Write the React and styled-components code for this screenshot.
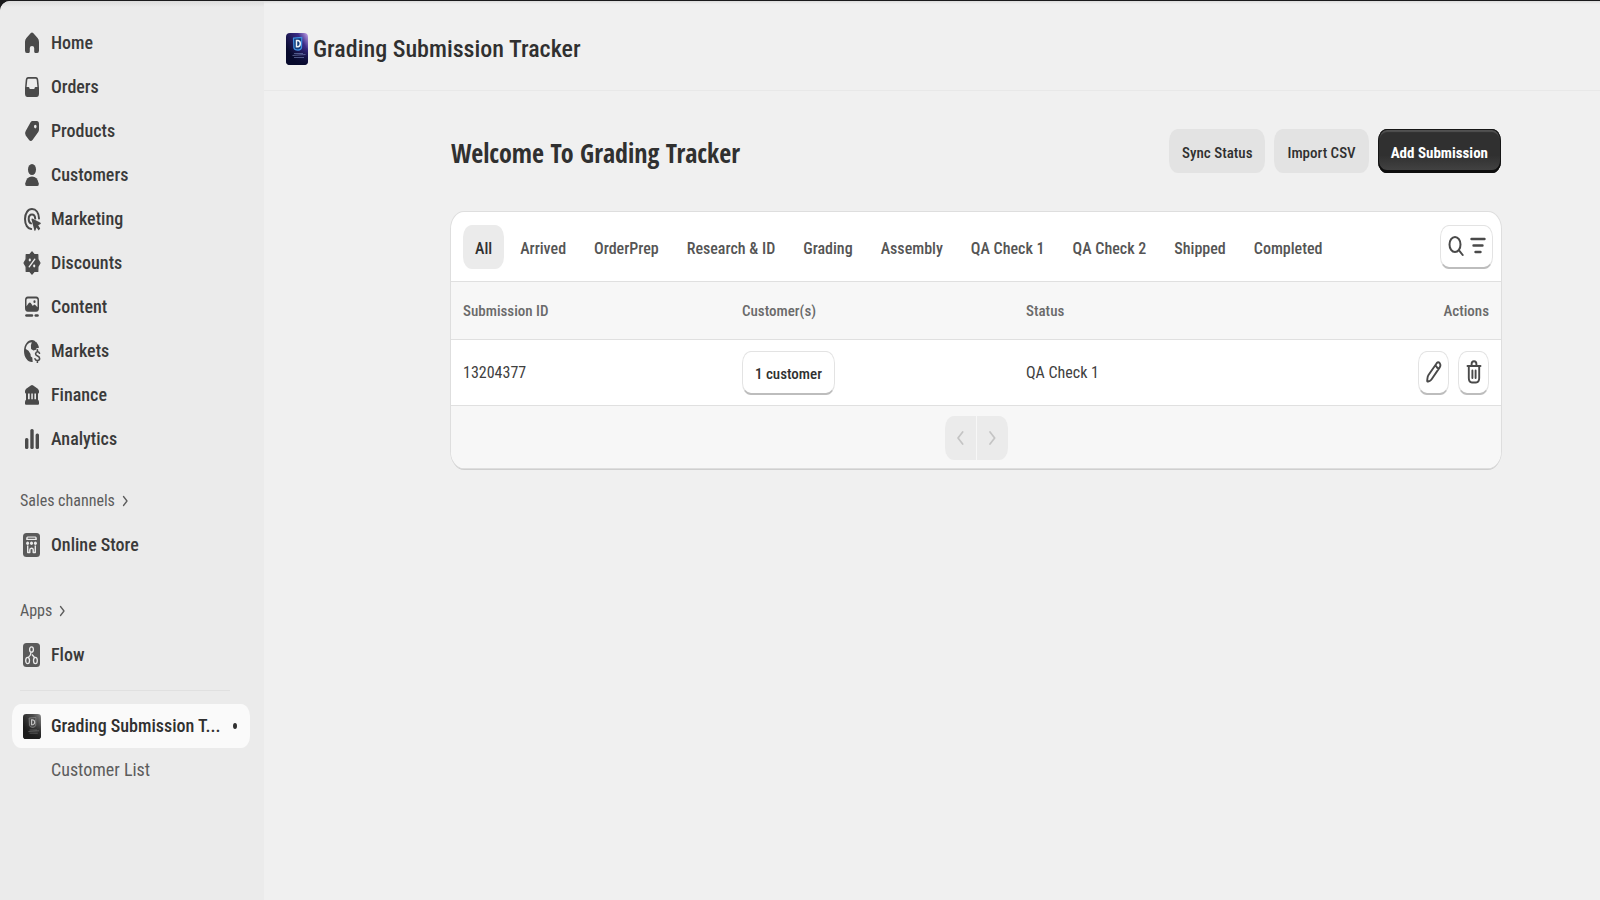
import React from "react";
import styled, { createGlobalStyle, css } from "styled-components";

const GlobalStyle = createGlobalStyle`
  *, *::before, *::after { box-sizing: border-box; }
  body {
    margin: 0;
    background: #1a1a1c;
    color: #303030;
    font-family: "Roboto Condensed", "Liberation Sans", sans-serif;
    font-size: 16px;
    line-height: 24px;
  }
  button, a { font: inherit; color: inherit; text-decoration: none; }
  button { border: 0; margin: 0; padding: 0; background: none; cursor: pointer; }
  h1, h2, h3, ul { margin: 0; padding: 0; font-weight: inherit; font-size: inherit; }
  ul { list-style: none; }
  svg { display: block; flex: none; }
`;

/* ---------- shell ---------- */

const Shell = styled.div`
  display: grid;
  grid-template-columns: 264px minmax(0, 1fr);
  min-height: calc(100vh - 1px);
  margin-top: 1px;
  border-top-left-radius: 10px;
  overflow: hidden;
  background: linear-gradient(#dcdcdc, #f0f0f0 3px);
`;

const Sidebar = styled.nav`
  padding: 20px 14px 20px 12px;
  background: linear-gradient(#dcdcdc, #ebebeb 6px);
  font-size: 18px;
`;

const NavLink = styled.a`
  display: flex;
  align-items: center;
  gap: 10px;
  height: 44px;
  padding: 0 13px 0 11px;
  border-radius: 9px / 12px;
  font-weight: 500;
  color: ${(p) => (p.$active ? "#303030" : "#3a3a3a")};
  background: ${(p) => (p.$active ? "#fafafa" : "transparent")};
`;

const SubLink = styled(NavLink)`
  padding-left: 39px;
  font-weight: 400;
  color: #5c5c5c;
`;

const Dot = styled.span`
  width: 4px;
  height: 6px;
  margin-left: auto;
  border-radius: 50%;
  background: #303030;
`;

const Group = styled.section`
  margin-top: ${(p) => p.$gap}px;
`;

const GroupTitle = styled.h2`
  display: flex;
  align-items: center;
  gap: 7px;
  height: 44px;
  padding-left: 8px;
  font-size: 16px;
  color: #5c5c5c;
`;

const Divider = styled.hr`
  height: 1px;
  margin: 13px 20px 13px 8px;
  border: 0;
  background: #e0e0e0;
`;

const Glyph = styled.svg`
  width: 18px;
  height: 24px;
  color: #4a4a4a;
`;

const icon = (children) => () => (
  <Glyph viewBox="0 0 18 24" fill="currentColor" aria-hidden="true">
    {children}
  </Glyph>
);

const HomeIcon = icon(
  <path d="M7.6 2.2Q9 .9 10.4 2.2L14.6 7Q16 8.7 16 11v8.5q0 2.5-1.8 2.500h-2q-1 0-1-1.400V17q0-2-2.200-2t-2.200 2v3.600q0 1.400-1 1.400h-2Q2 22 2 19.500V11q0-2.300 1.400-4z" />
);
const OrdersIcon = icon(
  <path
    fillRule="evenodd"
    d="M5.200 2h7.600q2.200 0 2.500 3L16 13v5.500q0 3.500-2.600 3.500H4.600Q2 22 2 18.500V13l.7-8q.3-3 2.500-3zm.2 1.800q-1 0-1.100 1.300L3.600 12h1.900q.7 0 .8.8 0 1.200 1 1.200h3.400q1 0 1-1.200.1-.8.8-.8h1.900l-.7-6.900q-.1-1.300-1.100-1.300z"
  />
);
const ProductsIcon = icon(
  <path
    fillRule="evenodd"
    d="M9.500 2h4.200q2.300 0 2.300 3v5.500q0 1.500-.9 2.800l-5.400 7.500q-1.900 2.400-3.800 0l-3.200-4.300q-1.500-2.300 0-4.600L7.600 3.200Q8.400 2 9.500 2zm2.800 3.800a1.300 1.800 0 1 0 0 3.600 1.300 1.800 0 0 0 0-3.600z"
  />
);
const CustomersIcon = icon(
  <>
    <ellipse cx="9" cy="6.500" rx="4" ry="5.500" />
    <path d="M2.200 20.500Q3.500 13.500 9 13.500t6.800 7q.3 2.500-1.500 2.500H3.700q-1.800 0-1.500-2.500z" />
  </>
);
const MarketingIcon = icon(
  <>
    <path d="M16 11.500C15.800 5.800 13 2 9 2s-7 4.200-7 10 2.800 9.800 6.200 10" fill="none" stroke="currentColor" strokeWidth="2" strokeLinecap="round" />
    <path d="M12.200 11.500C12 8.800 10.800 7.500 9 7.500S5.700 9.300 5.700 12s1 4 2.300 4.400" fill="none" stroke="currentColor" strokeWidth="2" strokeLinecap="round" />
    <path d="M9.300 11.500l8.200 4.200q.7.500 0 1.200l-2.300 1.300 2 3.200-1.500 2.100-2.200-3-1.100 3q-.5.900-1 0L8.500 12.600q-.1-1.200.8-1.100z" />
  </>
);
const DiscountsIcon = icon(
  <>
    <path
      d="M9 .8L11.300 3.600 14.800 3.600 14.900 8.400 17 12 14.900 15.600 14.800 20.400 11.300 20.400 9 23.200 6.700 20.400 3.200 20.400 3.100 15.600 1 12 3.100 8.400 3.200 3.600 6.700 3.600z"
      stroke="currentColor"
      strokeWidth="1.200"
      strokeLinejoin="round"
    />
    <path d="M11.800 8.200l-5.600 7.600" stroke="#ebebeb" strokeWidth="1.400" strokeLinecap="round" />
    <ellipse cx="6.800" cy="9" rx="1.100" ry="1.400" fill="#ebebeb" />
    <ellipse cx="11.200" cy="15" rx="1.100" ry="1.400" fill="#ebebeb" />
  </>
);
const ContentIcon = icon(
  <>
    <path
      fillRule="evenodd"
      d="M4.800 1.500h8.400Q16 1.500 16 5v8q0 3.800-2.800 3.800H4.800Q2 16.800 2 13V5q0-3.500 2.800-3.500zm0 1.900Q3.500 3.400 3.500 5v6.200L5.800 8q1-1.200 2 0l2 3 .9-1q.8-.9 1.600 0l2.200 2.200V5q0-1.600-1.300-1.600zM11.500 5.300a1.100 1.400 0 1 1 0 2.800 1.100 1.400 0 0 1 0-2.800z"
    />
    <rect x="2.200" y="19.300" width="8" height="2.400" rx="1.200" />
    <rect x="11.500" y="19.300" width="4.300" height="2.400" rx="1.200" />
  </>
);
const MarketsIcon = icon(
  <>
    <path d="M9 1C4.600 1 1 5.700 1 12s3.600 11 8 11h.7l-.4-4.500-1.500-.9-.3-2.700-2-3.200-2.700-1.800C3 6.300 5.500 3.200 8.800 3.200l-.9 3 .2 3.900 2.300 1.300 3.200-1L12 7.500l1.700-3.200C12.400 2.200 10.900 1 9 1z" />
    <path d="M12.900 2.800c1.600 1.500 2.700 3.600 3.100 6l-2.300.4-2.600 1.500 1-4.500z" />
    <path d="M16.500 14.200Q16 12.700 14.500 12.700t-1.900 2q0 1.600 2 2.400t2 2.400q0 2-2.100 2T12 19.900M14.400 10.800v1.900M14.400 21.500v1.900" fill="none" stroke="currentColor" strokeWidth="1.600" strokeLinecap="round" />
  </>
);
const FinanceIcon = icon(
  <>
    <path d="M7.800 2.400q1.200-1 2.400 0l4.600 3.400Q16 6.800 16 8.300v.9q0 1.300-1 1.300H3q-1 0-1-1.300v-.9q0-1.500 1.200-2.500z" />
    <path d="M3 10h2v7H3zM6.700 10h1.600v7H6.700zM9.800 10h1.600v7H9.800zM13 10h2v7h-2z" />
    <path d="M3.500 16.300h11Q16 17.300 16 19v1.500q0 1.200-1 1.200H3q-1 0-1-1.200V19q0-1.700 1.500-2.700z" />
  </>
);
const AnalyticsIcon = icon(
  <>
    <rect x="2" y="11" width="3.400" height="11" rx="1.500" />
    <rect x="7.300" y="2" width="3.400" height="20" rx="1.500" />
    <rect x="12.600" y="6.500" width="3.400" height="15.500" rx="1.500" />
  </>
);
const StoreIcon = icon(
  <>
    <rect x="0" y="0" width="17" height="24" rx="3.500" fill="#5a5a5a" />
    <path d="M4.500 3.500h8Q13.500 3.500 13.800 5v2H3.200V5Q3.500 3.500 4.500 3.500z" fill="#ebebeb" />
    <path d="M4.700 5.200h7.600" stroke="#5a5a5a" strokeWidth="1.200" />
    <g fill="#ebebeb">
      <ellipse cx="4.600" cy="10.200" rx="1.500" ry="1.700" />
      <ellipse cx="8.500" cy="10.200" rx="1.500" ry="1.700" />
      <ellipse cx="12.400" cy="10.200" rx="1.500" ry="1.700" />
    </g>
    <path d="M4.700 12.500v7h2.100V17q0-1.800 1.700-1.800t1.700 1.800v2.500h2.100v-7" fill="none" stroke="#ebebeb" strokeWidth="1.400" strokeLinejoin="round" />
  </>
);
const FlowIcon = icon(
  <>
    <rect x="0" y="0" width="17" height="24" rx="3.500" fill="#5a5a5a" />
    <g fill="none" stroke="#ebebeb" strokeWidth="1.300">
      <ellipse cx="8.500" cy="6.500" rx="1.900" ry="2.700" />
      <ellipse cx="4.600" cy="17.500" rx="1.900" ry="3.200" />
      <ellipse cx="12.400" cy="17.500" rx="1.900" ry="3.200" />
      <path d="M8 9.200Q8.200 12 5.300 14.500M9 11.500l2.500 3" />
    </g>
  </>
);
const Chevron = ({ left, size = 12 }) => (
  <svg width={size / 2} height={size} viewBox="0 0 6 12" fill="none" stroke="currentColor" strokeWidth="1.300" strokeLinecap="round" strokeLinejoin="round" aria-hidden="true">
    <path d={left ? "M5 1.500L1.500 6 5 10.500" : "M1.500 1.500L5 6l-3.500 4.500"} />
  </svg>
);

const AppLogo = ({ id, width, height, stops, badge, caption }) => (
  <svg width={width} height={height} viewBox="0 0 22 32" preserveAspectRatio="none" aria-hidden="true">
    <defs>
      <linearGradient id={id} x1="1" y1="0" x2="0.2" y2="0.700">
        <stop offset="0" stopColor={stops[0]} />
        <stop offset="0.350" stopColor={stops[1]} />
        <stop offset="1" stopColor={stops[2]} />
      </linearGradient>
      <linearGradient id={`${id}-base`} x1="0" y1="0" x2="0" y2="1">
        <stop offset="0.450" stopColor={stops[2]} stopOpacity="0" />
        <stop offset="1" stopColor={stops[2]} />
      </linearGradient>
    </defs>
    <rect width="22" height="32" rx="4" fill={`url(#${id})`} />
    <rect width="22" height="32" rx="4" fill={`url(#${id}-base)`} />
    <path d="M7.500 5.200l8.300-.8-.3 10.200q-.2 2-3.500 2.600-3.800-.4-4.100-2.400z" fill={badge[0]} stroke={badge[1]} strokeWidth="1.200" />
    <path d="M10.500 7.500h1.600q2.200.3 2.200 3t-2.200 3.300h-1.600z" fill="none" stroke={badge[2]} strokeWidth="1.500" />
    <path d="M8 20.500h9M6.500 22.500l13-1M8 24.500h10" stroke={caption} strokeWidth="0.900" opacity="0.500" />
  </svg>
);

/* ---------- main area ---------- */

const Main = styled.main`
  min-width: 0;
`;

const TitleBar = styled.header`
  display: flex;
  align-items: center;
  gap: 5px;
  height: 90px;
  padding: 6px 22px 0;
  border-bottom: 1px solid #e8e8e8;
  font-size: 24px;
  font-weight: 500;
`;

const Content = styled.div`
  padding: 38px 99px 0 187px;
`;

const PageHead = styled.div`
  display: flex;
  align-items: center;
  justify-content: space-between;
  margin-bottom: 39px;
`;

const PageTitle = styled.h2`
  padding-top: 4px;
  font-family: "Open Sans Condensed", "Roboto Condensed", sans-serif;
  font-size: 26px;
  line-height: 36px;
  font-weight: 700;
`;

const ButtonRow = styled.div`
  display: flex;
  gap: 9px;
`;

const Button = styled.button`
  height: 44px;
  padding: 4px 13px 0;
  border-radius: 9px / 12px;
  font-size: 15px;
  font-weight: 500;
  background: #e3e3e3;
  ${(p) =>
    p.$primary &&
    css`
      color: #fff;
      font-weight: 700;
      background: linear-gradient(#303030 60%, #454545);
      box-shadow: inset 0 -3px 0 #0e0e0e, inset 0 0 0 1px #161616, inset 0 3px 1px #525252;
    `}
`;

const OutlineButton = styled.button`
  display: flex;
  align-items: center;
  justify-content: center;
  gap: 6px;
  height: 44px;
  width: ${(p) => (p.$width ? `${p.$width}px` : "auto")};
  padding: ${(p) => (p.$width ? "0" : "4px 12px 0")};
  border: 1px solid #e3e3e3;
  border-bottom: 2px solid #bdbdbd;
  border-radius: 9px / 12px;
  font-size: 15px;
  font-weight: 500;
  background: #fff;
  color: ${(p) => (p.$width ? "#4a4a4a" : "#303030")};
`;

const Card = styled.section`
  border-radius: 13px / 17px;
  overflow: hidden;
  background: #fff;
  box-shadow: 0 0 0 1px #dedede, 0 2px 0 #cfcfcf;
`;

const Toolbar = styled.div`
  display: flex;
  align-items: center;
  justify-content: space-between;
  height: 69px;
  padding: 0 8px 0 12px;
`;

const Tabs = styled.div`
  display: flex;
  gap: 4px;
`;

const Tab = styled.button`
  height: 44px;
  padding: 4px 12px 0;
  border-radius: 9px / 12px;
  color: ${(p) => (p.$active ? "#303030" : "#555555")};
  font-weight: 500;
  background: ${(p) => (p.$active ? "#ebebeb" : "transparent")};
`;

const Table = styled.table`
  width: 100%;
  table-layout: fixed;
  border-collapse: collapse;
  text-align: left;
`;

const HeadCell = styled.th`
  width: ${(p) => (p.$width ? `${p.$width}px` : "auto")};
  height: 58px;
  padding: 0 12px;
  border-top: 1px solid #e0e0e0;
  font-size: 15px;
  font-weight: 500;
  color: #6a6a6a;
  background: #f7f7f7;
  text-align: ${(p) => (p.$end ? "right" : "left")};
`;

const Cell = styled.td`
  height: 66px;
  padding: 0 12px;
  border-top: 1px solid #e0e0e0;
  border-bottom: 1px solid #e0e0e0;
  color: #404040;
`;

const CellActions = styled.div`
  display: flex;
  justify-content: flex-end;
  gap: 9px;
`;

const Footer = styled.div`
  display: flex;
  justify-content: center;
  gap: 1px;
  padding: 10px 0 8px;
  background: #f7f7f7;
`;

const PageButton = styled.button`
  display: flex;
  align-items: center;
  justify-content: center;
  width: 31px;
  height: 44px;
  background: #ebebeb;
  color: #c4c4c4;
  border-radius: ${(p) => (p.$side === "left" ? "9px 0 0 9px / 12px 0 0 12px" : "0 9px 9px 0 / 0 12px 12px 0")};
`;

const SearchIcon = () => (
  <svg width="16" height="22" viewBox="0 0 16 22" fill="none" stroke="currentColor" strokeWidth="2" strokeLinecap="round" aria-hidden="true">
    <ellipse cx="7" cy="9.500" rx="5.500" ry="7.500" />
    <path d="M11 15.300l3.700 4.700" />
  </svg>
);
const FilterIcon = () => (
  <svg width="16" height="22" viewBox="0 0 16 22" stroke="currentColor" strokeWidth="2.400" strokeLinecap="round" aria-hidden="true">
    <path d="M1.500 4h13M3.500 10.500h9M5.500 17h5" />
  </svg>
);
const PencilIcon = () => (
  <svg width="16" height="22" viewBox="0 0 16 22" fill="none" stroke="currentColor" strokeWidth="1.900" strokeLinejoin="round" aria-hidden="true">
    <path d="M10.700 2.200q1.500-1.800 3 0 1.400 2.100 0 4.200L5.800 18Q5 19.300 3.800 19.800L2 20.500q-.9.200-.8-1L1.500 17q.1-1.700 1-3zM9.300 4.200l3.200 4.200" />
  </svg>
);
const TrashIcon = () => (
  <svg width="16" height="24" viewBox="0 0 16 24" fill="none" stroke="currentColor" strokeWidth="1.900" strokeLinecap="round" aria-hidden="true">
    <path d="M1.500 6h13M5.600 5.500V4Q5.600 1.300 8 1.300T10.400 4v1.500M2.800 6.500v11.600Q2.800 22.500 6 22.500h4q3.200 0 3.200-4.400V6.500M6.400 10.500v7.500M9.600 10.500v7.500" />
  </svg>
);

const NAV = [
  ["Home", HomeIcon],
  ["Orders", OrdersIcon],
  ["Products", ProductsIcon],
  ["Customers", CustomersIcon],
  ["Marketing", MarketingIcon],
  ["Discounts", DiscountsIcon],
  ["Content", ContentIcon],
  ["Markets", MarketsIcon],
  ["Finance", FinanceIcon],
  ["Analytics", AnalyticsIcon],
];

const TABS = ["All", "Arrived", "OrderPrep", "Research & ID", "Grading", "Assembly", "QA Check 1", "QA Check 2", "Shipped", "Completed"];

export default function App() {
  return (
    <>
      <GlobalStyle />
      <Shell>
        <Sidebar aria-label="Main">
          <ul>
            {NAV.map(([label, Icon]) => (
              <li key={label}>
                <NavLink href="#">
                  <Icon />
                  {label}
                </NavLink>
              </li>
            ))}
          </ul>
          <Group $gap={18}>
            <GroupTitle>
              Sales channels <Chevron />
            </GroupTitle>
            <NavLink href="#">
              <StoreIcon />
              Online Store
            </NavLink>
          </Group>
          <Group $gap={22}>
            <GroupTitle>
              Apps <Chevron />
            </GroupTitle>
            <NavLink href="#">
              <FlowIcon />
              Flow
            </NavLink>
          </Group>
          <Divider />
          <NavLink href="#" $active aria-current="page">
            <AppLogo id="logo-mono" width={18} height={25} stops={["#8c8c8c", "#4c4c4c", "#1c1c1c"]} badge={["#4a4a4a", "#7e7e7e", "#c4c4c4"]} caption="#b5b5b5" />
            Grading Submission T...
            <Dot />
          </NavLink>
          <SubLink href="#">Customer List</SubLink>
        </Sidebar>

        <Main>
          <TitleBar>
            <AppLogo id="logo-color" width={22} height={32} stops={["#c9a8ee", "#3a2a86", "#070a2c"]} badge={["#123a78", "#3f8fe0", "#f2f5fa"]} caption="#9fb4e8" />
            <h1>Grading Submission Tracker</h1>
          </TitleBar>
          <Content>
            <PageHead>
              <PageTitle>Welcome To Grading Tracker</PageTitle>
              <ButtonRow>
                <Button type="button">Sync Status</Button>
                <Button type="button">Import CSV</Button>
                <Button type="button" $primary>
                  Add Submission
                </Button>
              </ButtonRow>
            </PageHead>
            <Card>
              <Toolbar>
                <Tabs role="tablist">
                  {TABS.map((label, i) => (
                    <Tab key={label} type="button" role="tab" aria-selected={i === 0} $active={i === 0}>
                      {label}
                    </Tab>
                  ))}
                </Tabs>
                <OutlineButton type="button" $width={53} aria-label="Search and filter">
                  <SearchIcon />
                  <FilterIcon />
                </OutlineButton>
              </Toolbar>
              <Table>
                <thead>
                  <tr>
                    <HeadCell $width={279}>Submission ID</HeadCell>
                    <HeadCell $width={284}>Customer(s)</HeadCell>
                    <HeadCell>Status</HeadCell>
                    <HeadCell $end>Actions</HeadCell>
                  </tr>
                </thead>
                <tbody>
                  <tr>
                    <Cell>13204377</Cell>
                    <Cell>
                      <OutlineButton type="button">1 customer</OutlineButton>
                    </Cell>
                    <Cell>QA Check 1</Cell>
                    <Cell>
                      <CellActions>
                        <OutlineButton type="button" $width={31} aria-label="Edit">
                          <PencilIcon />
                        </OutlineButton>
                        <OutlineButton type="button" $width={31} aria-label="Delete">
                          <TrashIcon />
                        </OutlineButton>
                      </CellActions>
                    </Cell>
                  </tr>
                </tbody>
              </Table>
              <Footer>
                <PageButton type="button" $side="left" disabled aria-label="Previous page">
                  <Chevron left size={16} />
                </PageButton>
                <PageButton type="button" $side="right" disabled aria-label="Next page">
                  <Chevron size={16} />
                </PageButton>
              </Footer>
            </Card>
          </Content>
        </Main>
      </Shell>
    </>
  );
}
